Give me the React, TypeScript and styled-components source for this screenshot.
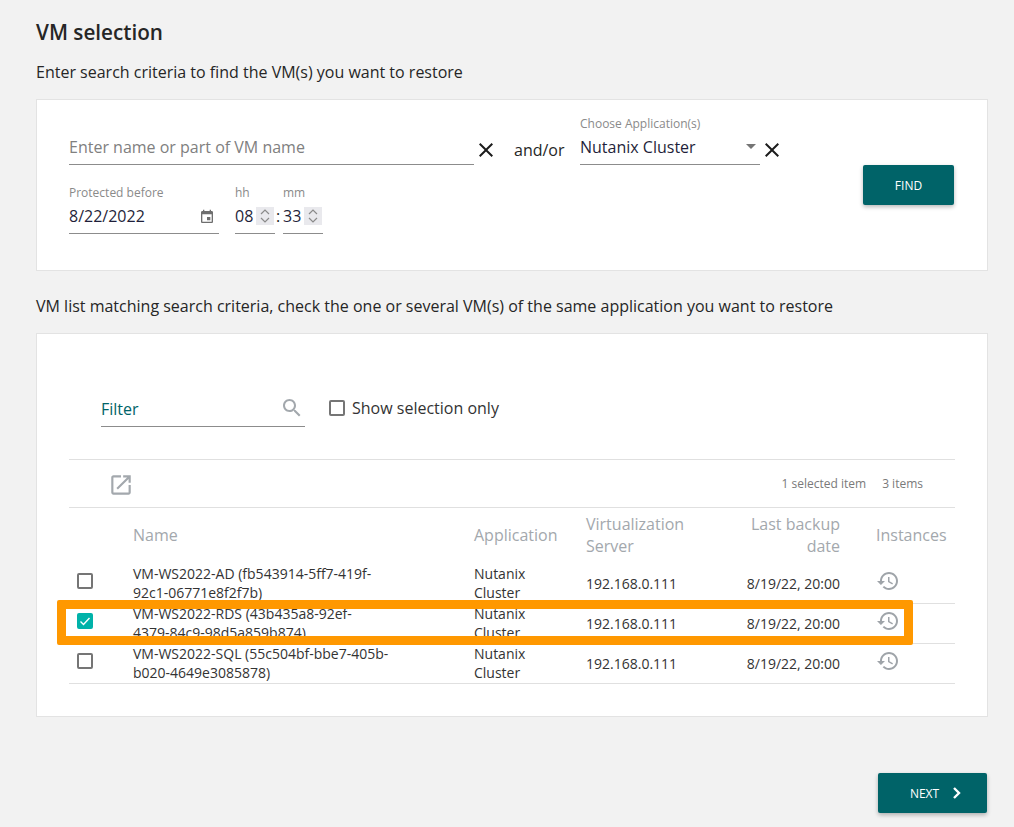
import React from "react";
import styled, { createGlobalStyle } from "styled-components";

const Global = createGlobalStyle`
  html, body { margin: 0; padding: 0; background: #f2f2f2; }
  body { font-family: "Open Sans", "Liberation Sans", sans-serif; color: #212121; }
  * { box-sizing: border-box; }
`;

const Page = styled.div`
  width: 1014px;
  height: 827px;
  padding: 20px 26px 0 36px;
  overflow: hidden;
`;
const Title = styled.h1`
  margin: 0;
  font-size: 20.7px;
  line-height: 24px;
  font-weight: 600;
  color: #262626;
`;
const Lead = styled.p<{ $top: number }>`
  margin: ${(p) => p.$top}px 0 0;
  font-size: 16px;
  line-height: 20px;
  color: #262626;
`;
const Card = styled.section<{ $top: number; $height: number }>`
  margin-top: ${(p) => p.$top}px;
  height: ${(p) => p.$height}px;
  background: #fff;
  border: 1px solid #e3e3e3;
  padding: 0 33px 0 32px;
`;
const SearchLayout = styled.div`
  display: flex;
  justify-content: space-between;
  padding-top: 16px;
`;
const FormColumn = styled.div`
  display: flex;
  flex-direction: column;
  gap: 20px;
`;
const FormRow = styled.div`
  display: flex;
  align-items: flex-end;
`;
const Field = styled.div<{ $width: number; $gap?: number }>`
  width: ${(p) => p.$width}px;
  margin-right: ${(p) => p.$gap ?? 0}px;
  display: flex;
  flex-direction: column;
`;
const FieldLabel = styled.label`
  font-size: 12px;
  line-height: 16px;
  color: #8a8a8a;
  white-space: nowrap;
`;
const FieldValue = styled.div<{ $muted?: boolean }>`
  height: 33px;
  padding-top: 4px;
  display: flex;
  align-items: flex-start;
  justify-content: space-between;
  border-bottom: 1px solid #8c8c8c;
  font-size: 16px;
  line-height: 22px;
  color: ${(p) => (p.$muted ? "#808080" : "#1f1f3a")};
`;
const ClearIcon = styled.svg`
  width: 24px;
  height: 24px;
  fill: #1c1c1c;
  flex: none;
  margin-bottom: 3px;
`;
const AndOr = styled.span`
  margin: 0 16px;
  width: 50px;
  white-space: nowrap;
  font-size: 16px;
  line-height: 20px;
  padding-bottom: 5px;
  color: #262626;
`;
const SelectArrow = styled.i`
  width: 0;
  height: 0;
  margin: 8px 4px 0 0;
  border-left: 5px solid transparent;
  border-right: 5px solid transparent;
  border-top: 5px solid #757575;
`;
const Colon = styled.span`
  width: 8px;
  padding-left: 1px;
  font-size: 16px;
  line-height: 22px;
  padding-bottom: 7px;
`;
const TimeValue = styled(FieldValue)`
  justify-content: flex-start;
  gap: 3px;
`;
const Spinner = styled.span`
  width: 18px;
  height: 18px;
  margin-top: 2px;
  background: #e9e9ed;
  display: flex;
  flex-direction: column;
  align-items: center;
  justify-content: center;
  svg { width: 12px; height: 8px; stroke: #8b8b8b; fill: none; stroke-width: 1.2; }
`;
const CalendarIcon = styled.svg`
  width: 16px;
  height: 16px;
  fill: #6e6e6e;
  margin: 4px 4px 0 0;
`;
const Button = styled.button<{ $width: number }>`
  width: ${(p) => p.$width}px;
  height: 40px;
  border: 0;
  border-radius: 2px;
  background: #006368;
  color: #fff;
  font-family: inherit;
  font-size: 12px;
  box-shadow: 0 2px 4px rgba(0, 0, 0, 0.28);
  display: flex;
  align-items: center;
  justify-content: center;
  gap: 12px;
  padding: 0;
`;
const FindButton = styled(Button)`
  margin-top: 49px;
`;
const NextButton = styled(Button)`
  padding-left: 8px;
`;
const FooterBar = styled.div`
  margin-top: 56px;
  display: flex;
  justify-content: flex-end;
  padding-right: 1px;
`;
const FilterRow = styled.div`
  display: flex;
  align-items: flex-start;
  padding: 59px 0 0 32px;
  height: 125px;
`;
const FilterBox = styled.div`
  width: 204px;
  height: 34px;
  border-bottom: 1px solid #8c8c8c;
  display: flex;
  justify-content: space-between;
  color: #006368;
  font-size: 16px;
  line-height: 32px;
`;
const FilterIcon = styled.svg`
  width: 24px;
  height: 24px;
  fill: #a3a8ad;
  margin: 3px 1px 0 0;
`;
const CheckLabel = styled.label`
  display: flex;
  align-items: center;
  gap: 7px;
  margin-left: 24px;
  font-size: 16px;
  line-height: 30px;
  color: #333;
`;
const Box = styled.span<{ $checked?: boolean }>`
  width: 16px;
  height: 16px;
  flex: none;
  border-radius: 2px;
  border: 2px solid ${(p) => (p.$checked ? "#00b2a9" : "#757575")};
  background: ${(p) => (p.$checked ? "#00b2a9" : "#fff")};
  display: flex;
  align-items: center;
  justify-content: center;
  svg { width: 12px; height: 12px; fill: none; stroke: #fff; stroke-width: 1.4; }
`;
const TableWrap = styled.div`
  position: relative;
  margin-right: -1px;
  border-top: 1px solid #e0e0e0;
`;
const Toolbar = styled.div`
  height: 48px;
  border-bottom: 1px solid #e0e0e0;
  padding: 0 32px 0 39px;
  display: flex;
  align-items: center;
  justify-content: space-between;
`;
const ToolIcon = styled.svg`
  width: 26px;
  height: 26px;
  margin-top: 2px;
  fill: #a3a8ad;
`;
const Counts = styled.div`
  display: flex;
  gap: 16px;
  font-size: 12px;
  line-height: 16px;
  color: #7a7a7a;
`;
const COLUMNS = "64px 341px 112px 155px 99px 115px";
const HeadRow = styled.div`
  display: grid;
  grid-template-columns: ${COLUMNS};
  height: 56px;
  padding-bottom: 2px;
  align-items: center;
  color: #a3a8ad;
  font-size: 16px;
  line-height: 22px;
`;
const HeadCell = styled.div<{ $right?: boolean; $inset?: number }>`
  text-align: ${(p) => (p.$right ? "right" : "left")};
  padding-left: ${(p) => p.$inset ?? 0}px;
  white-space: nowrap;
`;
const Row = styled.div`
  display: grid;
  grid-template-columns: ${COLUMNS};
  height: 40px;
  border-bottom: 1px solid #e0e0e0;
  font-size: 14px;
  line-height: 19px;
  color: #333;
  overflow: hidden;
`;
const BoxCell = styled.div`
  padding: 9px 0 0 8px;
`;
const TextCell = styled.div`
  white-space: nowrap;
`;
const MidCell = styled.div<{ $right?: boolean }>`
  padding-top: 10px;
  white-space: nowrap;
  text-align: ${(p) => (p.$right ? "right" : "left")};
`;
const HistoryCell = styled.div`
  padding: 5px 0 0 36px;
`;
const HistoryIcon = styled.svg`
  display: block;
  width: 24px;
  height: 24px;
  fill: #9fa4a9;
`;
const Highlight = styled.div`
  position: absolute;
  left: -12px;
  top: 140px;
  width: 856px;
  height: 45px;
  border: 9px solid #ff9800;
  border-radius: 2px;
  pointer-events: none;
`;

const closePath = "M19 6.41 17.59 5 12 10.59 6.41 5 5 6.41 10.59 12 5 17.59 6.41 19 12 13.41 17.59 19 19 17.59 13.41 12z";
const historyPath = "M13 3c-4.97 0-9 4.03-9 9H1l3.89 3.89.07.14L9 12H6c0-3.87 3.13-7 7-7s7 3.13 7 7-3.13 7-7 7c-1.93 0-3.68-.79-4.94-2.06l-1.42 1.42C8.27 19.99 10.51 21 13 21c4.97 0 9-4.03 9-9s-4.03-9-9-9zm-1 5v5l4.28 2.54.72-1.21-3.5-2.08V8H12z";

const Clear = () => (
  <ClearIcon viewBox="0 0 24 24"><path d={closePath} /></ClearIcon>
);
const Spin = () => (
  <Spinner>
    <svg viewBox="0 0 12 8"><path d="M2 6l4-4 4 4" /></svg>
    <svg viewBox="0 0 12 8"><path d="M2 2l4 4 4-4" /></svg>
  </Spinner>
);

const vms = [
  { line1: "VM-WS2022-AD (fb543914-5ff7-419f-", line2: "92c1-06771e8f2f7b)", checked: false },
  { line1: "VM-WS2022-RDS (43b435a8-92ef-", line2: "4379-84c9-98d5a859b874)", checked: true },
  { line1: "VM-WS2022-SQL (55c504bf-bbe7-405b-", line2: "b020-4649e3085878)", checked: false },
];

export default function App() {
  return (
    <Page>
      <Global />
      <Title>VM selection</Title>
      <Lead $top={18}>Enter search criteria to find the VM(s) you want to restore</Lead>
      <Card $top={17} $height={172}>
        <SearchLayout>
          <FormColumn>
            <FormRow>
              <Field $width={405}>
                <FieldValue $muted>Enter name or part of VM name</FieldValue>
              </Field>
              <Clear />
              <AndOr>and/or</AndOr>
              <Field $width={180}>
                <FieldLabel>Choose Application(s)</FieldLabel>
                <FieldValue>
                  Nutanix Cluster
                  <SelectArrow />
                </FieldValue>
              </Field>
              <Clear />
            </FormRow>
            <FormRow>
              <Field $width={150} $gap={16}>
                <FieldLabel>Protected before</FieldLabel>
                <FieldValue>
                  8/22/2022
                  <CalendarIcon viewBox="0 0 24 24">
                    <path d="M17 12h-5v5h5v-5zM16 1v2H8V1H6v2H5c-1.11 0-1.99.9-1.99 2L3 19c0 1.1.89 2 2 2h14c1.1 0 2-.9 2-2V5c0-1.1-.9-2-2-2h-1V1h-2zm3 18H5V8h14v11z" />
                  </CalendarIcon>
                </FieldValue>
              </Field>
              <Field $width={40}>
                <FieldLabel>hh</FieldLabel>
                <TimeValue>08<Spin /></TimeValue>
              </Field>
              <Colon>:</Colon>
              <Field $width={40}>
                <FieldLabel>mm</FieldLabel>
                <TimeValue>33<Spin /></TimeValue>
              </Field>
            </FormRow>
          </FormColumn>
          <FindButton $width={91}>FIND</FindButton>
        </SearchLayout>
      </Card>
      <Lead $top={25}>VM list matching search criteria, check the one or several VM(s) of the same application you want to restore</Lead>
      <Card $top={17} $height={384}>
        <FilterRow>
          <FilterBox>
            Filter
            <FilterIcon viewBox="0 0 24 24">
              <path d="M15.5 14h-.79l-.28-.27C15.41 12.59 16 11.11 16 9.5 16 5.91 13.09 3 9.5 3S3 5.91 3 9.5 5.91 16 9.5 16c1.61 0 3.09-.59 4.23-1.57l.27.28v.79l5 4.99L20.49 19l-4.99-5zm-6 0C7.01 14 5 11.99 5 9.5S7.01 5 9.5 5 14 7.01 14 9.5 11.99 14 9.5 14z" />
            </FilterIcon>
          </FilterBox>
          <CheckLabel><Box />Show selection only</CheckLabel>
        </FilterRow>
        <TableWrap>
          <Toolbar>
            <ToolIcon viewBox="0 0 24 24">
              <path d="M19 19H5V5h7V3H5c-1.11 0-2 .9-2 2v14c0 1.1.89 2 2 2h14c1.1 0 2-.9 2-2v-7h-2v7zM14 3v2h3.59l-9.83 9.83 1.41 1.41L19 6.41V10h2V3h-7z" />
            </ToolIcon>
            <Counts>
              <span>1 selected item</span>
              <span>3 items</span>
            </Counts>
          </Toolbar>
          <HeadRow>
            <span />
            <HeadCell>Name</HeadCell>
            <HeadCell>Application</HeadCell>
            <HeadCell>Virtualization<br />Server</HeadCell>
            <HeadCell $right>Last backup<br />date</HeadCell>
            <HeadCell $inset={36}>Instances</HeadCell>
          </HeadRow>
          {vms.map((vm) => (
            <Row key={vm.line1}>
              <BoxCell>
                <Box $checked={vm.checked}>
                  {vm.checked && (
                    <svg viewBox="0 0 12 12"><path d="M1.5 6.5l3 3 6-6.5" /></svg>
                  )}
                </Box>
              </BoxCell>
              <TextCell>{vm.line1}<br />{vm.line2}</TextCell>
              <TextCell>Nutanix<br />Cluster</TextCell>
              <MidCell>192.168.0.111</MidCell>
              <MidCell $right>8/19/22, 20:00</MidCell>
              <HistoryCell>
                <HistoryIcon viewBox="0 0 24 24"><path d={historyPath} /></HistoryIcon>
              </HistoryCell>
            </Row>
          ))}
          <Highlight />
        </TableWrap>
      </Card>
      <FooterBar>
        <NextButton $width={109}>
          NEXT
          <svg width="12" height="14" viewBox="0 0 12 14" fill="none" stroke="#fff" strokeWidth="2.4">
            <path d="M3 2l5 5-5 5" />
          </svg>
        </NextButton>
      </FooterBar>
    </Page>
  );
}
